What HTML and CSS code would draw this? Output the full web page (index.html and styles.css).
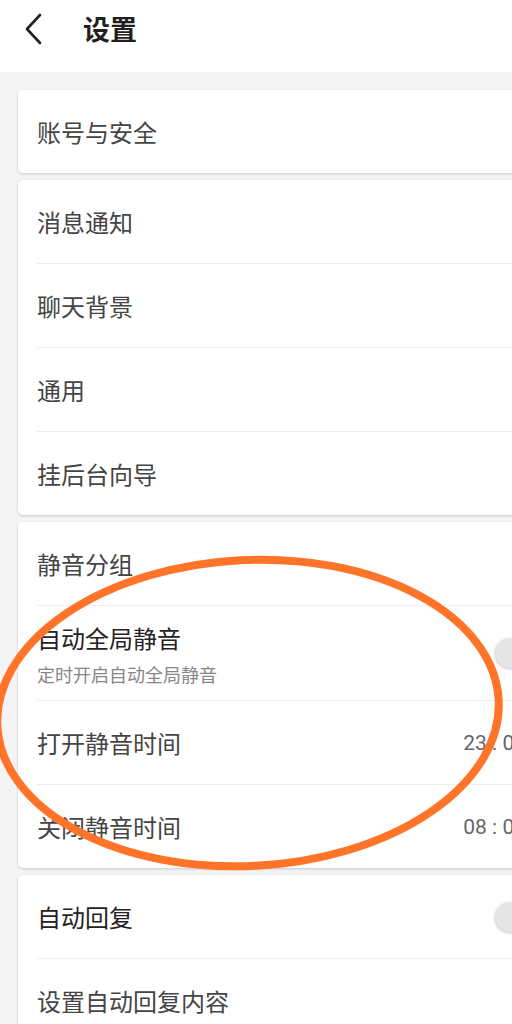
FILE: index.html
```html
<!DOCTYPE html>
<html lang="zh-CN">
<head>
  <meta charset="UTF-8">
  <meta name="viewport" content="width=device-width, initial-scale=1.0">
  <title>设置</title>
  <link rel="stylesheet" href="styles.css">
</head>
<body>
  <div class="page">
    <header class="topbar">
      <svg class="back" width="20" height="32" viewBox="0 0 20 32">
        <path d="M16 2 L3 16 L16 30" fill="none" stroke="#222" stroke-width="2.6" stroke-linecap="round" stroke-linejoin="round"/>
      </svg>
      <h1>设置</h1>
    </header>

    <div class="card">
      <div class="row">账号与安全</div>
    </div>

    <div class="card">
      <div class="row">消息通知</div>
      <div class="row">聊天背景</div>
      <div class="row">通用</div>
      <div class="row">挂后台向导</div>
    </div>

    <div class="card">
      <div class="row">静音分组</div>
      <div class="row tall">
        <div class="label">
          <span class="strong">自动全局静音</span>
          <span class="hint">定时开启自动全局静音</span>
        </div>
        <span class="switch"><span class="thumb"></span></span>
      </div>
      <div class="row">打开静音时间<span class="time">23 : 00</span></div>
      <div class="row">关闭静音时间<span class="time">08 : 00</span></div>
    </div>

    <div class="card">
      <div class="row"><span class="strong">自动回复</span><span class="switch"><span class="thumb"></span></span></div>
      <div class="row">设置自动回复内容</div>
    </div>
  </div>

  <svg class="mark" width="512" height="1024" viewBox="0 0 512 1024">
    <ellipse cx="248" cy="713" rx="251" ry="153" transform="rotate(-3 248 713)" fill="none" stroke="#ff7428" stroke-width="8"/>
  </svg>
</body>
</html>
```

FILE: styles.css
```css
html, body {
  margin: 0;
  overflow: hidden;
}
body {
  font-family: "Noto Sans CJK SC", "Noto Sans", sans-serif;
  background-color: #f4f4f4;
}
.page {
  width: 580px;
}
.topbar {
  height: 72px;
  background: #fff;
  display: flex;
  align-items: center;
  padding: 0 0 14px 24px;
  box-sizing: border-box;
  margin-bottom: 18px;
}
.topbar .back {
  margin-right: 39px;
}
.topbar h1 {
  margin: 0;
  font-size: 27px;
  font-weight: 700;
  color: #231f20;
  line-height: 30px;
}
.card {
  background: #fff;
  margin: 0 18px 7px;
  border-radius: 5px;
  box-shadow: 0 1px 3px rgba(0,0,0,0.18);
  padding-left: 19px;
}
.row {
  height: 83px;
  display: flex;
  align-items: center;
  justify-content: space-between;
  padding-right: 19px;
  font-size: 24px;
  color: #454545;
  border-bottom: 1px solid #eeeeee;
}
.row:last-child {
  border-bottom: none;
}
.row.tall {
  height: 94px;
}
.label {
  display: flex;
  flex-direction: column;
}
.strong {
  color: #262222;
}
.hint {
  font-size: 18px;
  color: #8a8686;
  margin-top: 6px;
}
.time {
  font-family: Roboto, sans-serif;
  font-size: 21px;
  color: #666;
  padding-right: 17px;
}
.switch {
  width: 48px;
  display: flex;
}
.thumb {
  width: 30px;
  height: 30px;
  border-radius: 50%;
  background: #e6e6e6;
  box-shadow: 0 1px 3px rgba(0,0,0,0.25);
}
.mark {
  position: absolute;
  top: 0;
  left: 0;
  pointer-events: none;
}
```
